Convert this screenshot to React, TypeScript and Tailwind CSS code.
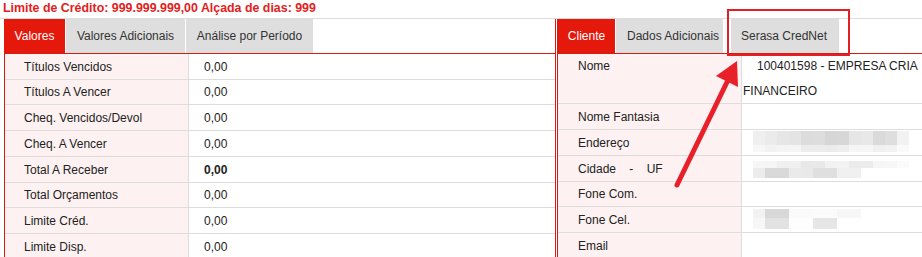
import React from "react";

type Row = { label: string; value: string; bold?: boolean; h: string };

const valores: Row[] = [
  { label: "Títulos Vencidos", value: "0,00", h: "h-[26px]" },
  { label: "Títulos A Vencer", value: "0,00", h: "h-[25px]" },
  { label: "Cheq. Vencidos/Devol", value: "0,00", h: "h-[26px]" },
  { label: "Cheq. A Vencer", value: "0,00", h: "h-[26px]" },
  { label: "Total A Receber", value: "0,00", bold: true, h: "h-[26px]" },
  { label: "Total Orçamentos", value: "0,00", h: "h-[25px]" },
  { label: "Limite Créd.", value: "0,00", h: "h-[26px]" },
  { label: "Limite Disp.", value: "0,00", h: "h-[26px]" },
];

// pixelated (blurred) values
const blurEndereco = {
  top: ["#efefef", "#ebebeb", "#e6e6e6", "#e4e4e4", "#dcdcdc", "#dddddd", "#d6d6d6", "#d7d7d7", "#e6e6e6", "#e8e8e8", "#dadada", "#dedede", "#f2f2f2"],
  bottom: ["#f7f7f7", "#f2f2f2", "#f4f4f4", "#f5f5f5", "#ececec", "#ececec", "#ebebeb", "#eeeeee", "#f5f5f5", "#f6f6f6", "#f0f0f0", "#f2f2f2", "#fafafa"],
  topH: "h-[14px]",
  botH: "h-[7px]",
  mt: "mt-[1px]",
};
const blurCidade = {
  top: ["#f6f6f6", "#f5f5f5", "#efefef", "#f0f0f0", "#e8e8e8", "#e9e9e9", "#f2f2f2", "#f3f3f3", "#ebebeb", "#ececec", "#f6f6f6", "#f7f7f7", "#fbfbfb"],
  bottom: ["#ececec", "#d9d9d9", "#d9d9d9", "#eaeaea", "#e9e9e9", "#dfdfdf", "#dfdfdf", "#f0f0f0", "#f0f0f0"],
  topH: "h-[7px]",
  botH: "h-[10px]",
  mt: "mt-[5px]",
};
const blurFone = {
  top: ["#f2f2f2", "#d8d8d8", "#d8d8d8", "#fafafa", "#fafafa", "#fbfbfb", "#fbfbfb", "#f7f7f7", "#f7f7f7"],
  bottom: ["#f7f7f7", "#e2e2e2", "#e2e2e2", "#fdfdfd", "#fdfdfd", "#e6e6e6", "#e6e6e6", "#ffffff"],
  topH: "h-[9px]",
  botH: "h-[11px]",
  mt: "mt-[2px]",
};

type Blur = typeof blurEndereco;

const Mosaic: React.FC<{ b: Blur }> = ({ b }) => (
  <div className={`flex flex-col ${b.mt} ml-[11px]`}>
    <div className="flex">
      {b.top.map((c, i) => (
        <div key={i} className={`w-[12px] ${b.topH}`} style={{ backgroundColor: c }} />
      ))}
    </div>
    <div className="flex">
      {b.bottom.map((c, i) => (
        <div key={i} className={`w-[12px] ${b.botH}`} style={{ backgroundColor: c }} />
      ))}
    </div>
  </div>
);

type ClienteRow = { label: string; h: string; blur?: Blur };

const cliente: ClienteRow[] = [
  { label: "Nome Fantasia", h: "h-[26px]" },
  { label: "Endereço", h: "h-[26px]", blur: blurEndereco },
  { label: "Cidade    -    UF", h: "h-[26px]", blur: blurCidade },
  { label: "Fone Com.", h: "h-[25px]" },
  { label: "Fone Cel.", h: "h-[26px]", blur: blurFone },
  { label: "Email", h: "h-[26px]" },
];

const App: React.FC = () => {
  return (
    <div
      className="relative w-[922px] h-[257px] overflow-hidden bg-white text-[12px] text-[#222]"
      style={{ fontFamily: '"Liberation Sans", Arial, sans-serif' }}
    >
      {/* TITLE */}
      <div className="h-[18px] leading-[16px] pl-[3px] font-bold text-[12.4px] text-[#e3201b] whitespace-nowrap">
        Limite de Crédito: 999.999.999,00 Alçada de dias: 999
      </div>

      {/* PANELS */}
      <div className="flex border-t border-[#dcdcdc]">
        {/* LEFT PANEL */}
        <div className="ml-[4px] w-[552px] shrink-0 border-r border-[#d51c14] flex flex-col">
          <div className="flex h-[34px] gap-[1px]">
            <div className="w-[61px] bg-[#e5180c] text-white flex items-center justify-center">Valores</div>
            <div className="w-[119px] bg-[#dedede] text-[#333] flex items-center justify-center">Valores Adicionais</div>
            <div className="w-[127px] bg-[#dedede] text-[#333] flex items-center justify-center">Análise por Período</div>
          </div>
          <div className="border-t border-l border-[#d51c14]">
            {valores.map((r) => (
              <div key={r.label} className={`flex ${r.h} border-b border-[#dddddd]`}>
                <div className="w-[184px] shrink-0 bg-[#fdf1f1] border-r border-[#dddddd] pl-[19px] flex items-center">
                  {r.label}
                </div>
                <div className={`pl-[15px] flex items-center ${r.bold ? "font-bold" : ""}`}>{r.value}</div>
              </div>
            ))}
          </div>
        </div>

        {/* RIGHT PANEL */}
        <div className="ml-[1px] flex-1 border-l border-[#d51c14] flex flex-col">
          <div className="flex h-[34px]">
            <div className="w-[57px] bg-[#e5180c] text-white flex items-center justify-center">Cliente</div>
            <div className="ml-[1px] w-[107px] bg-[#dedede] text-[#333] flex items-center pl-[11px]">Dados Adicionais</div>
            <div className="ml-[8px] w-[108px] bg-[#dedede] text-[#333] flex items-center pl-[10px]">Serasa CredNet</div>
          </div>
          <div className="border-t border-[#d51c14]">
            <div className="flex h-[50px] border-b border-[#dddddd]">
              <div className="w-[184px] shrink-0 bg-[#fdf1f1] border-r border-[#dddddd] pl-[20px] leading-[25px]">Nome</div>
              <div className="pl-[1px] leading-[25px] whitespace-nowrap">
                <div className="pl-[14px]">100401598 - EMPRESA CRIA</div>
                <div>FINANCEIRO</div>
              </div>
            </div>
            {cliente.map((r) => (
              <div key={r.label} className={`flex ${r.h} border-b border-[#dddddd]`}>
                <div className="w-[184px] shrink-0 bg-[#fdf1f1] border-r border-[#dddddd] pl-[20px] flex items-center whitespace-pre">
                  {r.label}
                </div>
                {r.blur && <Mosaic b={r.blur} />}
              </div>
            ))}
          </div>
        </div>
      </div>

      {/* ANNOTATION */}
      <svg className="absolute left-0 top-0 pointer-events-none" width="922" height="257">
        <rect x="728" y="10" width="121" height="45" fill="none" stroke="#e31e24" strokeWidth="2" />
        <line x1="677" y1="185" x2="729" y2="78" stroke="#e8202a" strokeWidth="5" strokeLinecap="round" />
        <polygon points="737,61 738,87 716,76" fill="#e8202a" />
      </svg>
    </div>
  );
};

export default App;
